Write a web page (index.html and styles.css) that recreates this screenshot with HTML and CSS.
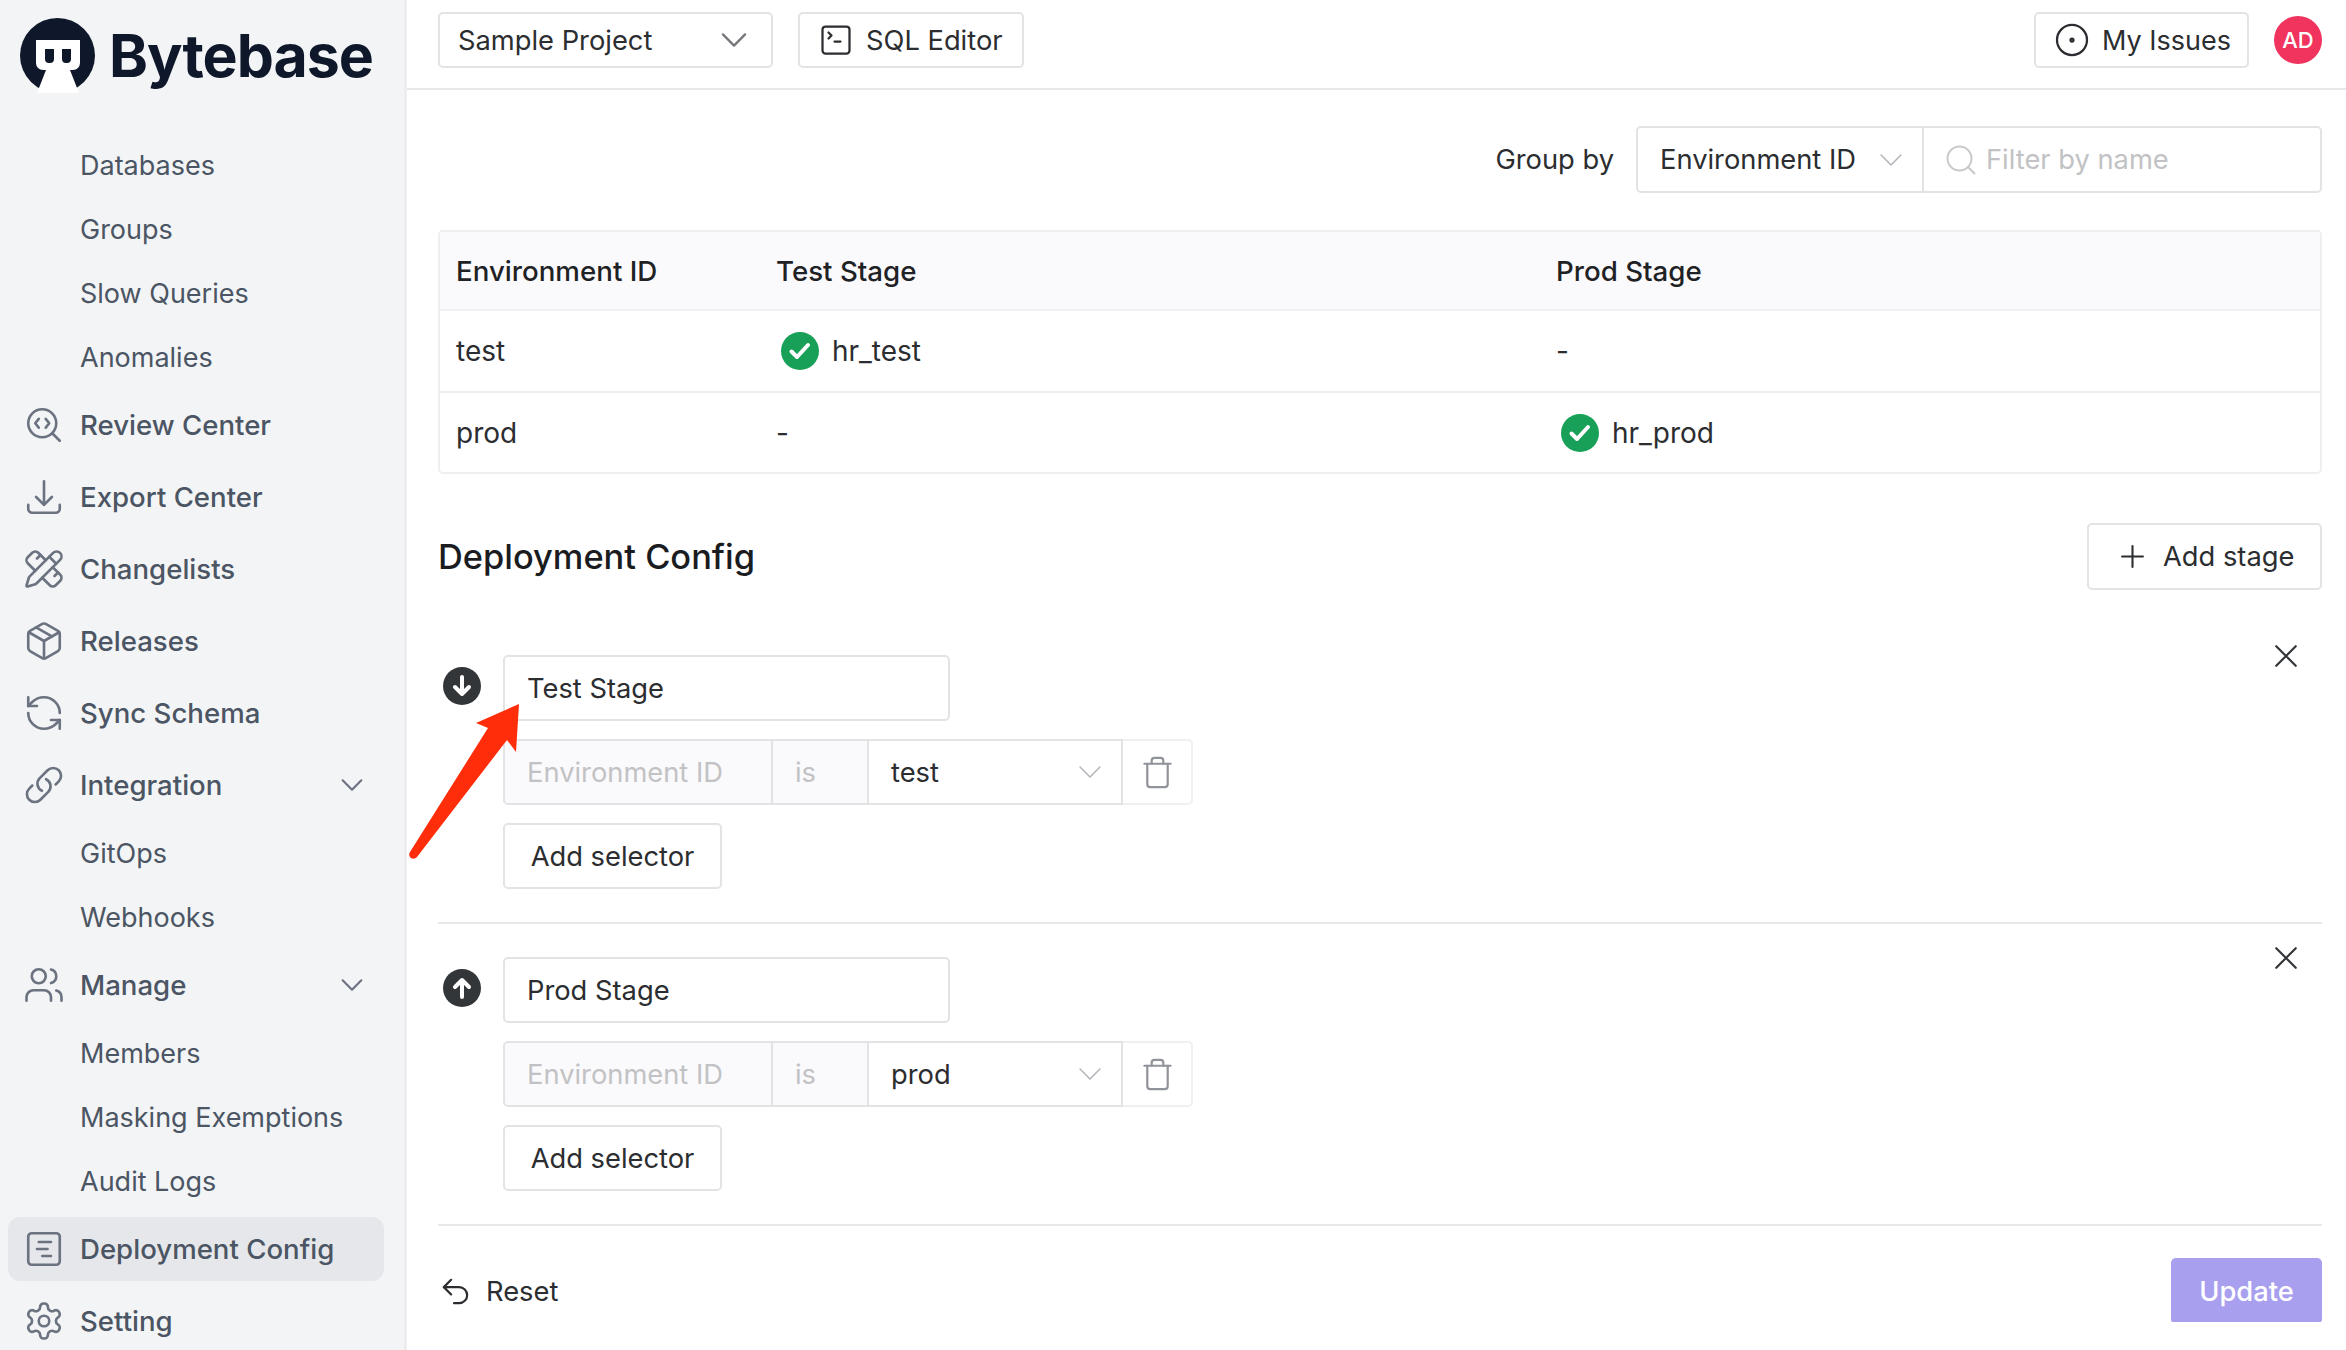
FILE: index.html
```html
<!DOCTYPE html>
<html lang="en">
<head>
  <meta charset="UTF-8">
  <title>Deployment Config - Bytebase</title>
  <link rel="stylesheet" href="styles.css">
</head>
<body>
  <svg class="sprite" aria-hidden="true">
    <symbol id="chevron" viewBox="0 0 24 24"><path d="m5 8.500 7 7 7-7"/></symbol>
    <symbol id="trash" viewBox="0 0 24 24"><path d="M19 6v14a2 2 0 0 1-2 2H7a2 2 0 0 1-2-2V6"/><path d="M3 6h18"/><path d="M8 6V4a2 2 0 0 1 2-2h4a2 2 0 0 1 2 2v2"/></symbol>
    <symbol id="close" viewBox="0 0 24 24"><path d="M3 3l18 18M21 3 3 21"/></symbol>
    <symbol id="check" viewBox="0 0 38 38"><circle cx="19" cy="19" r="19" fill="#18a058" stroke="none"/><path d="m10.500 19.500 5.500 5.500 11-12" stroke="#fff"/></symbol>
  </svg>

  <aside class="sidebar">
    <div class="brand">
      <svg class="logo" viewBox="0 0 75 75">
        <circle cx="37.500" cy="37.500" r="37.500" fill="#0f172a"/>
        <path d="M16 22h44v23a7 7 0 0 1-7 7h-3l9 23H17l9-23h-3a7 7 0 0 1-7-7z" fill="#fff"/>
        <path d="M25 31h9v10a4 4 0 0 1-4 4h-1a4 4 0 0 1-4-4zM42 31h9v10a4 4 0 0 1-4 4h-1a4 4 0 0 1-4-4z" fill="#0f172a"/>
      </svg>
      <span class="brand-name">Bytebase</span>
    </div>

    <nav class="nav">
      <a class="nav-sub">Databases</a>
      <a class="nav-sub">Groups</a>
      <a class="nav-sub">Slow Queries</a>
      <a class="nav-sub">Anomalies</a>
      <a class="nav-item">
        <svg class="nav-icon" viewBox="0 0 24 24"><path d="m13 13.500 2-2.500-2-2.500"/><path d="m21 21-4.300-4.300"/><path d="M9 8.500 7 11l2 2.500"/><circle cx="11" cy="11" r="8"/></svg>
        Review Center
      </a>
      <a class="nav-item">
        <svg class="nav-icon" viewBox="0 0 24 24"><path d="M3 16.500v2.250A2.250 2.250 0 0 0 5.250 21h13.500A2.250 2.250 0 0 0 21 18.750V16.500M16.500 12 12 16.500m0 0L7.500 12m4.500 4.500V3"/></svg>
        Export Center
      </a>
      <a class="nav-item">
        <svg class="nav-icon" viewBox="0 0 24 24"><path d="M13 7 8.700 2.700a2.410 2.410 0 0 0-3.400 0L2.700 5.300a2.410 2.410 0 0 0 0 3.400L7 13"/><path d="m8 6 2-2"/><path d="m18 16 2-2"/><path d="m17 11 4.300 4.300c.94.94.94 2.460 0 3.400l-2.600 2.600c-.94.94-2.460.94-3.400 0L11 17"/><path d="M21.174 6.812a1 1 0 0 0-3.986-3.987L3.842 16.174a2 2 0 0 0-.5.83l-1.321 4.352a.5.5 0 0 0 .623.622l4.353-1.320a2 2 0 0 0 .83-.497z"/><path d="m15 5 4 4"/></svg>
        Changelists
      </a>
      <a class="nav-item">
        <svg class="nav-icon" viewBox="0 0 24 24"><path d="m7.500 4.270 9 5.150"/><path d="M21 8a2 2 0 0 0-1-1.730l-7-4a2 2 0 0 0-2 0l-7 4A2 2 0 0 0 3 8v8a2 2 0 0 0 1 1.730l7 4a2 2 0 0 0 2 0l7-4A2 2 0 0 0 21 16Z"/><path d="m3.300 7 8.700 5 8.700-5"/><path d="M12 22V12"/></svg>
        Releases
      </a>
      <a class="nav-item">
        <svg class="nav-icon" viewBox="0 0 24 24"><path d="M21 12a9 9 0 0 0-9-9 9.750 9.750 0 0 0-6.740 2.740L3 8"/><path d="M3 3v5h5"/><path d="M3 12a9 9 0 0 0 9 9 9.750 9.750 0 0 0 6.740-2.740L21 16"/><path d="M16 16h5v5"/></svg>
        Sync Schema
      </a>
      <a class="nav-item">
        <svg class="nav-icon" viewBox="0 0 24 24"><path d="M13.190 8.688a4.500 4.500 0 0 1 1.242 7.244l-4.500 4.500a4.500 4.500 0 0 1-6.364-6.364l1.757-1.757m13.350-.622 1.757-1.757a4.500 4.500 0 0 0-6.364-6.364l-4.500 4.500a4.500 4.500 0 0 0 1.242 7.244"/></svg>
        Integration
        <svg class="nav-chevron"><use href="#chevron"/></svg>
      </a>
      <a class="nav-sub">GitOps</a>
      <a class="nav-sub">Webhooks</a>
      <a class="nav-item">
        <svg class="nav-icon" viewBox="0 0 24 24"><path d="M16 21v-2a4 4 0 0 0-4-4H6a4 4 0 0 0-4 4v2"/><circle cx="9" cy="7" r="4"/><path d="M22 21v-2a4 4 0 0 0-3-3.870"/><path d="M16 3.130a4 4 0 0 1 0 7.750"/></svg>
        Manage
        <svg class="nav-chevron"><use href="#chevron"/></svg>
      </a>
      <a class="nav-sub">Members</a>
      <a class="nav-sub">Masking Exemptions</a>
      <a class="nav-sub">Audit Logs</a>
      <a class="nav-item active">
        <svg class="nav-icon" viewBox="0 0 24 24"><rect x="3" y="3" width="18" height="18" rx="2"/><path d="M9 8h7"/><path d="M8 12h6"/><path d="M11 16h5"/></svg>
        Deployment Config
      </a>
      <a class="nav-item">
        <svg class="nav-icon" viewBox="0 0 24 24"><path d="M12.220 2h-.44a2 2 0 0 0-2 2v.18a2 2 0 0 1-1 1.730l-.43.25a2 2 0 0 1-2 0l-.15-.08a2 2 0 0 0-2.730.73l-.22.38a2 2 0 0 0 .73 2.730l.15.1a2 2 0 0 1 1 1.720v.51a2 2 0 0 1-1 1.740l-.15.09a2 2 0 0 0-.73 2.730l.22.38a2 2 0 0 0 2.730.73l.15-.08a2 2 0 0 1 2 0l.43.25a2 2 0 0 1 1 1.730V20a2 2 0 0 0 2 2h.44a2 2 0 0 0 2-2v-.18a2 2 0 0 1 1-1.730l.43-.25a2 2 0 0 1 2 0l.15.08a2 2 0 0 0 2.730-.73l.22-.39a2 2 0 0 0-.73-2.730l-.15-.08a2 2 0 0 1-1-1.740v-.5a2 2 0 0 1 1-1.740l.15-.09a2 2 0 0 0 .73-2.730l-.22-.38a2 2 0 0 0-2.730-.73l-.15.08a2 2 0 0 1-2 0l-.43-.25a2 2 0 0 1-1-1.730V4a2 2 0 0 0-2-2z"/><circle cx="12" cy="12" r="3"/></svg>
        Setting
      </a>
    </nav>
  </aside>

  <div class="main">
    <header class="topbar">
      <div class="btn project-select">
        Sample Project
        <svg class="chevron-big"><use href="#chevron"/></svg>
      </div>
      <div class="btn sql-btn">
        <svg class="btn-icon" viewBox="0 0 24 24"><path d="m7 11 2-2-2-2"/><path d="M11 13h4"/><rect x="3" y="3" width="18" height="18" rx="2"/></svg>
        SQL Editor
      </div>
      <div class="btn issues-btn">
        <svg class="btn-icon" viewBox="0 0 24 24"><circle cx="12" cy="12" r="10"/><circle cx="12" cy="12" r="1"/></svg>
        My Issues
      </div>
      <div class="avatar">AD</div>
    </header>

    <main class="content">
      <div class="toolbar">
        <span class="group-label">Group by</span>
        <div class="group-select">
          Environment ID
          <svg class="chevron-small"><use href="#chevron"/></svg>
        </div>
        <div class="filter">
          <svg class="search-icon" viewBox="0 0 24 24"><circle cx="11" cy="11" r="8"/><path d="m21 21-4.300-4.300"/></svg>
          Filter by name
        </div>
      </div>

      <table class="env-table">
        <thead>
          <tr><th class="col-env">Environment ID</th><th class="col-stage">Test Stage</th><th>Prod Stage</th></tr>
        </thead>
        <tbody>
          <tr>
            <td>test</td>
            <td><span class="db"><svg class="ok"><use href="#check"/></svg>hr_test</span></td>
            <td>-</td>
          </tr>
          <tr>
            <td>prod</td>
            <td>-</td>
            <td><span class="db"><svg class="ok"><use href="#check"/></svg>hr_prod</span></td>
          </tr>
        </tbody>
      </table>

      <div class="config-head">
        <h2>Deployment Config</h2>
        <div class="btn add-stage">
          <svg class="plus" viewBox="0 0 24 24"><path d="M12 2v20M2 12h20"/></svg>
          Add stage
        </div>
      </div>

      <section class="stage">
        <div class="stage-badge">
          <svg viewBox="0 0 38 38"><circle cx="19" cy="19" r="19" fill="#333639" stroke="none"/><path d="M19 10v17m-7-7 7 7 7-7" stroke="#fff"/></svg>
        </div>
        <div class="stage-body">
          <div class="stage-name">Test Stage</div>
          <div class="selector">
            <div class="seg seg-key">Environment ID</div>
            <div class="seg seg-op">is</div>
            <div class="seg seg-value">test<svg class="chevron-small"><use href="#chevron"/></svg></div>
            <div class="seg seg-del"><svg class="trash-icon"><use href="#trash"/></svg></div>
          </div>
          <div class="btn add-selector">Add selector</div>
        </div>
        <svg class="stage-close"><use href="#close"/></svg>
      </section>

      <section class="stage">
        <div class="stage-badge">
          <svg viewBox="0 0 38 38"><circle cx="19" cy="19" r="19" fill="#333639" stroke="none"/><path d="M19 28V11m-7 7 7-7 7 7" stroke="#fff"/></svg>
        </div>
        <div class="stage-body">
          <div class="stage-name">Prod Stage</div>
          <div class="selector">
            <div class="seg seg-key">Environment ID</div>
            <div class="seg seg-op">is</div>
            <div class="seg seg-value">prod<svg class="chevron-small"><use href="#chevron"/></svg></div>
            <div class="seg seg-del"><svg class="trash-icon"><use href="#trash"/></svg></div>
          </div>
          <div class="btn add-selector">Add selector</div>
        </div>
        <svg class="stage-close"><use href="#close"/></svg>
      </section>

      <div class="actions">
        <div class="reset">
          <svg class="reset-icon" viewBox="0 0 24 24"><path d="M9 14 4 9l5-5"/><path d="M4 9h10.500a5.500 5.500 0 0 1 5.500 5.500a5.500 5.500 0 0 1-5.500 5.500H11"/></svg>
          Reset
        </div>
        <div class="update">Update</div>
      </div>
    </main>
  </div>

  <!-- red annotation arrow pointing at the stage name -->
  <svg class="annotation" viewBox="0 0 120 170">
    <path d="M112 8 69 27 81 32 3 156c-3 5 3 9 7 5L100 44l9 12z"/>
  </svg>
</body>
</html>
```

FILE: styles.css
```css
* { box-sizing: border-box; }

html, body {
  margin: 0;
  height: 1350px;
  overflow: hidden;
}
body {
  display: flex;
  font-family: Inter, "Liberation Sans", sans-serif;
  font-size: 27.3px;
  color: #2b2d30;
  background: #fff;
}
svg {
  fill: none;
  stroke: currentColor;
  stroke-width: 2;
  stroke-linecap: round;
  stroke-linejoin: round;
}
.sprite { display: none; }

/* sidebar */
.sidebar {
  width: 407px;
  flex-shrink: 0;
  background: #f3f4f6;
  border-right: 3px solid #ededf0;
  color: #4b5563;
}
.brand {
  display: flex;
  align-items: center;
  height: 110px;
  padding-left: 20px;
}
.logo {
  width: 75px;
  height: 75px;
  stroke: none;
}
.brand-name {
  margin-left: 14px;
  font-size: 59px;
  font-weight: 700;
  letter-spacing: -1px;
  color: #0f172a;
}
.nav {
  display: flex;
  flex-direction: column;
  padding: 23px 20px 0 8px;
}
.nav-sub {
  display: flex;
  align-items: center;
  height: 64px;
  padding-left: 72px;
  font-size: 27px;
}
.nav-item {
  display: flex;
  align-items: center;
  height: 64px;
  margin: 4px 0;
  padding: 0 16px 0 15px;
  border-radius: 12px;
  font-size: 27.6px;
  font-weight: 500;
}
.nav-item.active { background: #e5e7eb; }
.nav-icon {
  width: 42px;
  height: 42px;
  margin-right: 15px;
  color: #6b7280;
  stroke-width: 1.5;
  flex-shrink: 0;
}
.nav-chevron {
  width: 32px;
  height: 32px;
  margin-left: auto;
  color: #6b7280;
  stroke-width: 1.6;
}

/* top bar */
.main {
  flex: 1;
  min-width: 0;
}
.topbar {
  display: flex;
  align-items: flex-start;
  height: 90px;
  padding: 12px 24px 0 31px;
  border-bottom: 2px solid #e8e8ea;
}
.btn {
  display: flex;
  align-items: center;
  height: 56px;
  background: #fff;
  border: 2px solid #e3e3e5;
  border-radius: 5px;
  white-space: nowrap;
}
.project-select {
  width: 335px;
  padding: 0 18px 0 18px;
  justify-content: space-between;
}
.chevron-big {
  width: 38px;
  height: 38px;
  color: #76787c;
  stroke-width: 1.5;
}
.sql-btn {
  margin-left: 25px;
  width: 226px;
  padding-left: 18px;
}
.issues-btn {
  margin-left: auto;
  width: 215px;
  padding-left: 18px;
  font-size: 27px;
}
.btn-icon {
  width: 36px;
  height: 36px;
  margin-right: 12px;
  stroke-width: 1.5;
  flex-shrink: 0;
}
.avatar {
  display: flex;
  align-items: center;
  justify-content: center;
  width: 48px;
  height: 48px;
  margin: 4px 0 0 25px;
  border-radius: 50%;
  background: #f0345e;
  color: #fff;
  font-size: 22px;
  font-weight: 500;
}

/* content */
.content {
  height: 1232px;
  overflow: hidden;
  padding: 36px 24px 0 31px;
}
.toolbar {
  display: flex;
  align-items: center;
  justify-content: flex-end;
  height: 67px;
}
.group-label { margin-right: 22px; }
.group-select {
  display: flex;
  align-items: center;
  justify-content: space-between;
  width: 288px;
  height: 100%;
  padding: 0 14px 0 22px;
  border: 2px solid #e3e3e5;
  border-radius: 5px 0 0 5px;
}
.chevron-small {
  width: 34px;
  height: 34px;
  color: #b3b5b9;
  stroke-width: 1.1;
}
.filter {
  display: flex;
  align-items: center;
  width: 398px;
  height: 100%;
  padding-left: 19px;
  border: 2px solid #e3e3e5;
  border-left: 0;
  border-radius: 0 5px 5px 0;
  color: #c2c2c4;
}
.search-icon {
  width: 36px;
  height: 36px;
  margin-right: 7px;
  color: #c9c9cb;
  stroke-width: 1.3;
}

.env-table {
  width: 100%;
  margin-top: 37px;
  border: 2px solid #efeff2;
  border-collapse: separate;
  border-spacing: 0;
  border-radius: 5px;
  table-layout: fixed;
  font-size: 28px;
}
.env-table th {
  height: 79px;
  padding: 0 16px;
  background: #fafafc;
  text-align: left;
  font-size: 27.7px;
  font-weight: 500;
  color: #1f2225;
  border-bottom: 2px solid #efeff2;
}
.env-table td {
  height: 82px;
  padding: 0 16px;
  border-bottom: 2px solid #efeff2;
}
.env-table tr:last-child td {
  height: 79px;
  border-bottom: 0;
}
.col-env { width: 320px; }
.col-stage { width: 780px; }
.db {
  display: flex;
  align-items: center;
}
.ok {
  width: 38px;
  height: 38px;
  margin: 0 13px 0 5px;
  stroke-width: 4;
}

.config-head {
  display: flex;
  align-items: center;
  justify-content: space-between;
  margin-top: 49px;
}
.config-head h2 {
  margin: 0;
  font-size: 34.4px;
  font-weight: 500;
  color: #1a1c1f;
}
.add-stage {
  width: 235px;
  height: 67px;
  padding-left: 31px;
}
.plus {
  width: 25px;
  height: 25px;
  margin-right: 18px;
  flex-shrink: 0;
}

.stage {
  display: flex;
  align-items: flex-start;
  padding-bottom: 33px;
  margin-top: 65px;
  border-bottom: 2px solid #e8e8ea;
}
.stage + .stage { margin-top: 33px; }
.stage-badge {
  width: 65px;
  padding: 12px 0 0 5px;
  flex-shrink: 0;
}
.stage-badge svg {
  display: block;
  width: 38px;
  height: 38px;
  stroke-width: 4;
}
.stage-body {
  display: flex;
  flex-direction: column;
  gap: 18px;
  align-items: flex-start;
}
.stage-name {
  display: flex;
  align-items: center;
  width: 447px;
  height: 66px;
  padding-left: 22px;
  border: 2px solid #e3e3e5;
  border-radius: 5px;
}
.selector {
  display: flex;
  width: 690px;
  height: 66px;
}
.seg {
  display: flex;
  align-items: center;
  border: 2px solid #e3e3e5;
  border-left-width: 0;
}
.seg-key {
  width: 270px;
  padding-left: 22px;
  border-left-width: 2px;
  border-radius: 5px 0 0 5px;
  background: #fafafc;
  color: #c2c2c4;
}
.seg-op {
  width: 96px;
  padding-left: 22px;
  background: #fafafc;
  color: #c2c2c4;
}
.seg-value {
  width: 254px;
  padding: 0 14px 0 22px;
  justify-content: space-between;
}
.seg-del {
  width: 70px;
  justify-content: center;
  border-color: #f0f0f2;
  border-radius: 0 5px 5px 0;
}
.trash-icon {
  width: 35px;
  height: 35px;
  color: #909399;
  stroke-width: 1.5;
}
.add-selector {
  justify-content: center;
  width: 219px;
  height: 66px;
}
.stage-close {
  width: 26px;
  height: 26px;
  margin: -12px 23px 0 auto;
  stroke-width: 2;
  color: #333639;
}

.actions {
  display: flex;
  align-items: flex-start;
  justify-content: space-between;
  margin-top: 32px;
}
.reset {
  display: flex;
  align-items: center;
  height: 66px;
}
.reset-icon {
  width: 35px;
  height: 35px;
  margin-right: 13px;
  stroke-width: 1.5;
}
.update {
  display: flex;
  align-items: center;
  justify-content: center;
  width: 151px;
  height: 66px;
  border-radius: 5px;
  background: #a8a0ee;
  color: #fff;
  font-weight: 500;
}

.annotation {
  position: absolute;
  left: 407px;
  top: 696px;
  width: 120px;
  height: 170px;
  stroke: none;
  fill: #ff2d0a;
}
```
